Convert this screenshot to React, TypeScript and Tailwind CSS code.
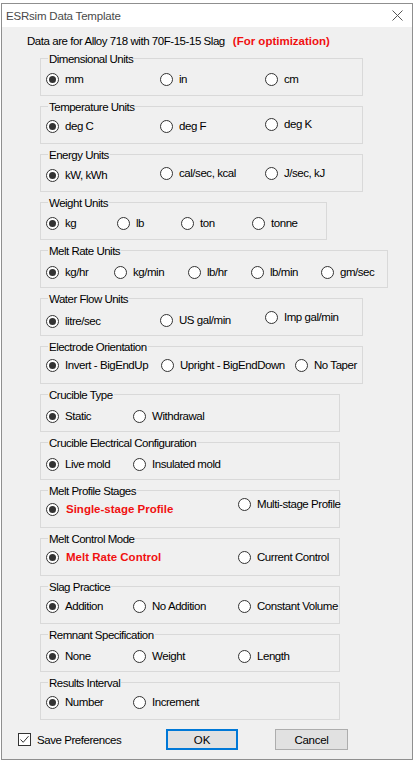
import React from "react";

type Opt = { label: string; checked?: boolean; red?: boolean; dy?: string };
type Group = { title: string; w: string; cols: string; pt: string; opts: Opt[] };

const groups: Group[] = [
  { title: "Dimensional Units", w: "w-[323px]", cols: "grid-cols-[114px_105px_1fr]", pt: "pt-[13px]", opts: [{ label: "mm", checked: true }, { label: "in" }, { label: "cm" }] },
  { title: "Temperature Units", w: "w-[323px]", cols: "grid-cols-[114px_105px_1fr]", pt: "pt-[12px]", opts: [{ label: "deg C", checked: true }, { label: "deg F" }, { label: "deg K", dy: "-mt-[2px]" }] },
  { title: "Energy Units", w: "w-[323px]", cols: "grid-cols-[114px_105px_1fr]", pt: "pt-[11px]", opts: [{ label: "kW, kWh", checked: true, dy: "mt-[2px]" }, { label: "cal/sec, kcal" }, { label: "J/sec, kJ" }] },
  { title: "Weight Units", w: "w-[287px]", cols: "grid-cols-[71px_64px_71px_1fr]", pt: "pt-[13px]", opts: [{ label: "kg", checked: true }, { label: "lb" }, { label: "ton" }, { label: "tonne" }] },
  { title: "Melt Rate Units", w: "w-[348px]", cols: "grid-cols-[68px_74px_63px_70px_1fr]", pt: "pt-[14px]", opts: [{ label: "kg/hr", checked: true }, { label: "kg/min" }, { label: "lb/hr" }, { label: "lb/min" }, { label: "gm/sec" }] },
  { title: "Water Flow Units", w: "w-[323px]", cols: "grid-cols-[114px_105px_1fr]", pt: "pt-[15px]", opts: [{ label: "litre/sec", checked: true }, { label: "US gal/min", dy: "-mt-[1px]" }, { label: "Imp gal/min", dy: "-mt-[4px]" }] },
  { title: "Electrode Orientation", w: "w-[323px]", cols: "grid-cols-[115px_134px_1fr]", pt: "pt-[11px]", opts: [{ label: "Invert - BigEndUp", checked: true }, { label: "Upright - BigEndDown" }, { label: "No Taper" }] },
  { title: "Crucible Type", w: "w-[300px]", cols: "grid-cols-[87px_1fr]", pt: "pt-[14px]", opts: [{ label: "Static", checked: true }, { label: "Withdrawal" }] },
  { title: "Crucible Electrical Configuration", w: "w-[300px]", cols: "grid-cols-[87px_1fr]", pt: "pt-[14px]", opts: [{ label: "Live mold", checked: true }, { label: "Insulated mold" }] },
  { title: "Melt Profile Stages", w: "w-[300px]", cols: "grid-cols-[192px_1fr]", pt: "pt-[11px]", opts: [{ label: "Single-stage Profile", checked: true, red: true }, { label: "Multi-stage Profile", dy: "-mt-[5px]" }] },
  { title: "Melt Control Mode", w: "w-[300px]", cols: "grid-cols-[192px_1fr]", pt: "pt-[11px]", opts: [{ label: "Melt Rate Control", checked: true, red: true }, { label: "Current Control" }] },
  { title: "Slag Practice", w: "w-[300px]", cols: "grid-cols-[87px_105px_1fr]", pt: "pt-[12px]", opts: [{ label: "Addition", checked: true }, { label: "No Addition" }, { label: "Constant Volume" }] },
  { title: "Remnant Specification", w: "w-[300px]", cols: "grid-cols-[87px_105px_1fr]", pt: "pt-[14px]", opts: [{ label: "None", checked: true }, { label: "Weight" }, { label: "Length" }] },
  { title: "Results Interval", w: "w-[300px]", cols: "grid-cols-[87px_1fr]", pt: "pt-[12px]", opts: [{ label: "Number", checked: true }, { label: "Increment" }] },
];

function Radio({ checked }: { checked?: boolean }) {
  return (
    <span className="w-[13px] h-[13px] rounded-full border border-[#333333] bg-white flex items-center justify-center shrink-0">
      {checked && <span className="w-[7px] h-[7px] rounded-full bg-[#333333]" />}
    </span>
  );
}

function Option({ o }: { o: Opt }) {
  return (
    <div className={`flex items-center h-[14px] whitespace-nowrap ${o.dy ?? ""}`}>
      <Radio checked={o.checked} />
      {o.red ? (
        <span className="ml-[7px] text-[11.5px] font-bold text-[#f01010] leading-[14px]">{o.label}</span>
      ) : (
        <span className="ml-[6px] text-[11.5px] tracking-[-0.45px] text-black leading-[14px]">{o.label}</span>
      )}
    </div>
  );
}

function GroupBox({ g }: { g: Group }) {
  return (
    <div className={`relative h-[38px] border border-[#d9d9d9] ${g.w}`}>
      <span className="absolute top-[-7px] left-[7px] px-[1px] bg-[#f0f0f0] text-[11.5px] tracking-[-0.5px] leading-[14px] text-black whitespace-nowrap">
        {g.title}
      </span>
      <div className={`grid ${g.cols} pl-[5px] ${g.pt} items-start`}>
        {g.opts.map((o) => (
          <Option key={o.label} o={o} />
        ))}
      </div>
    </div>
  );
}

export default function App() {
  return (
    <div className="w-[416px] h-[764px] bg-white overflow-hidden font-['Liberation_Sans',Arial,sans-serif]">
      <div className="h-[3px]" />
      <div className="ml-[1px] w-[412px] h-[757px] border border-[#8f8f8f] flex flex-col">
        <div className="h-[23px] bg-white flex items-center justify-between pl-[4px] pr-[9px]">
          <span className="text-[11.5px] text-[#4a4a4a] leading-[14px] tracking-[-0.2px]">ESRsim Data Template</span>
          <svg width="11" height="11" viewBox="0 0 11 11" className="block">
            <path d="M0.5 0.5 L10.5 10.5 M10.5 0.5 L0.5 10.5" stroke="#555" strokeWidth="1" fill="none" />
          </svg>
        </div>
        <div className="flex-1 bg-[#f0f0f0] flex flex-col">
          <div className="mt-[7px] pl-[25px] h-[14px] flex items-center whitespace-nowrap">
            <span className="text-[11.5px] tracking-[-0.45px] text-black leading-[14px]">Data are for Alloy 718 with 70F-15-15 Slag</span>
            <span className="ml-[8px] text-[11.5px] font-bold text-[#f01010] leading-[14px]">(For optimization)</span>
          </div>
          <div className="ml-[38px] mt-[10px] flex flex-col gap-[10px]">
            {groups.map((g) => (
              <GroupBox key={g.title} g={g} />
            ))}
          </div>
          <div className="mt-[9px] h-[21px] flex items-center">
            <div className="w-[148px] ml-[16px] flex items-center">
              <span className="w-[13px] h-[13px] border border-[#333333] bg-white flex items-center justify-center">
                <svg width="11" height="11" viewBox="0 0 11 11">
                  <path d="M1.5 5.5 L4.2 8.3 L9.5 2.2" stroke="#333" strokeWidth="1" fill="none" />
                </svg>
              </span>
              <span className="ml-[6px] text-[11.5px] tracking-[-0.45px] text-black leading-[14px] whitespace-nowrap">Save Preferences</span>
            </div>
            <div className="w-[72px] h-[21px] border-2 border-[#0078d7] bg-[#e1e1e1] flex items-center justify-center text-[11.5px] text-black leading-[14px]">OK</div>
            <div className="ml-[37px] w-[73px] h-[21px] border border-[#adadad] bg-[#e1e1e1] flex items-center justify-center text-[11.5px] tracking-[-0.3px] text-black leading-[14px]">Cancel</div>
          </div>
        </div>
      </div>
    </div>
  );
}
